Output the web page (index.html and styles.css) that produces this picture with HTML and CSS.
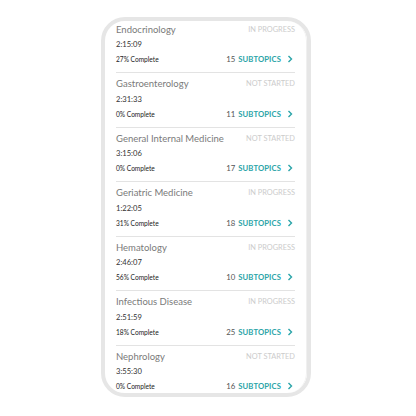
FILE: index.html
```html
<!DOCTYPE html>
<html>
<head>
<meta charset="utf-8">
<link rel="stylesheet" href="styles.css">
</head>
<body>
<div class="phone">
  <div class="screen">
    <div class="list">
      <div class="row">
        <div class="line"><span class="title">Endocrinology</span><span class="status">In Progress</span></div>
        <div class="line"><span class="time">2:15:09</span></div>
        <div class="line"><span class="pct">27% Complete</span><span class="sub"><span class="count">15</span><span class="label">SUBTOPICS</span><svg class="chev" viewBox="0 0 6 8"><polyline points="1.5,1 4.5,4 1.5,7"/></svg></span></div>
      </div>
      <div class="row">
        <div class="line"><span class="title">Gastroenterology</span><span class="status">Not Started</span></div>
        <div class="line"><span class="time">2:31:33</span></div>
        <div class="line"><span class="pct">0% Complete</span><span class="sub"><span class="count">11</span><span class="label">SUBTOPICS</span><svg class="chev" viewBox="0 0 6 8"><polyline points="1.5,1 4.5,4 1.5,7"/></svg></span></div>
      </div>
      <div class="row">
        <div class="line"><span class="title">General Internal Medicine</span><span class="status">Not Started</span></div>
        <div class="line"><span class="time">3:15:06</span></div>
        <div class="line"><span class="pct">0% Complete</span><span class="sub"><span class="count">17</span><span class="label">SUBTOPICS</span><svg class="chev" viewBox="0 0 6 8"><polyline points="1.5,1 4.5,4 1.5,7"/></svg></span></div>
      </div>
      <div class="row">
        <div class="line"><span class="title">Geriatric Medicine</span><span class="status">In Progress</span></div>
        <div class="line"><span class="time">1:22:05</span></div>
        <div class="line"><span class="pct">31% Complete</span><span class="sub"><span class="count">18</span><span class="label">SUBTOPICS</span><svg class="chev" viewBox="0 0 6 8"><polyline points="1.5,1 4.5,4 1.5,7"/></svg></span></div>
      </div>
      <div class="row">
        <div class="line"><span class="title">Hematology</span><span class="status">In Progress</span></div>
        <div class="line"><span class="time">2:46:07</span></div>
        <div class="line"><span class="pct">56% Complete</span><span class="sub"><span class="count">10</span><span class="label">SUBTOPICS</span><svg class="chev" viewBox="0 0 6 8"><polyline points="1.5,1 4.5,4 1.5,7"/></svg></span></div>
      </div>
      <div class="row">
        <div class="line"><span class="title">Infectious Disease</span><span class="status">In Progress</span></div>
        <div class="line"><span class="time">2:51:59</span></div>
        <div class="line"><span class="pct">18% Complete</span><span class="sub"><span class="count">25</span><span class="label">SUBTOPICS</span><svg class="chev" viewBox="0 0 6 8"><polyline points="1.5,1 4.5,4 1.5,7"/></svg></span></div>
      </div>
      <div class="row">
        <div class="line"><span class="title">Nephrology</span><span class="status">Not Started</span></div>
        <div class="line"><span class="time">3:55:30</span></div>
        <div class="line"><span class="pct">0% Complete</span><span class="sub"><span class="count">16</span><span class="label">SUBTOPICS</span><svg class="chev" viewBox="0 0 6 8"><polyline points="1.5,1 4.5,4 1.5,7"/></svg></span></div>
      </div>
    </div>
  </div>
</div>
</body>
</html>
```
FILE: styles.css
```css
html, body {
  margin: 0;
  padding: 0;
  background: #ffffff;
}
body {
  width: 416px;
  height: 416px;
  overflow: hidden;
  font-family: Lato, "Open Sans", sans-serif;
}
.phone {
  box-sizing: border-box;
  margin: 17px 0 0 101px;
  width: 210px;
  height: 380px;
  border: 4px solid #e6e6e6;
  border-radius: 24px;
  overflow: hidden;
  background: #fff;
}
.screen {
  height: 100%;
  overflow: hidden;
  border-right: 1px solid #f0f0f0;
  border-radius: 0 20px 20px 0;
  box-sizing: border-box;
}
.list {
  margin: -2.3px 11px 0 11px;
}
.row {
  padding: 3.1px 0 5.45px 0;
  border-bottom: 1px solid #e3e3e3;
}
.line {
  height: 15px;
  display: flex;
  align-items: center;
  justify-content: space-between;
}
.title {
  font-size: 9.5px;
  color: #7a7a7a;
  font-weight: 400;
}
.status {
  font-size: 7.4px;
  color: #cccccc;
  text-transform: uppercase;
  font-weight: 400;
}
.time {
  font-size: 7.6px;
  color: #333;
}
.pct {
  font-size: 6.6px;
  color: #222;
}
.sub {
  display: flex;
  align-items: center;
}
.count {
  font-size: 7.8px;
  color: #555;
  margin-right: 3px;
}
.label {
  font-size: 7.7px;
  color: #2aa4a8;
  font-weight: 700;
  letter-spacing: 0.1px;
}
.chev {
  width: 6px;
  height: 8px;
  margin-left: 6px;
  margin-right: 2px;
  fill: none;
  stroke: #2aa4a8;
  stroke-width: 1.4;
}
```
